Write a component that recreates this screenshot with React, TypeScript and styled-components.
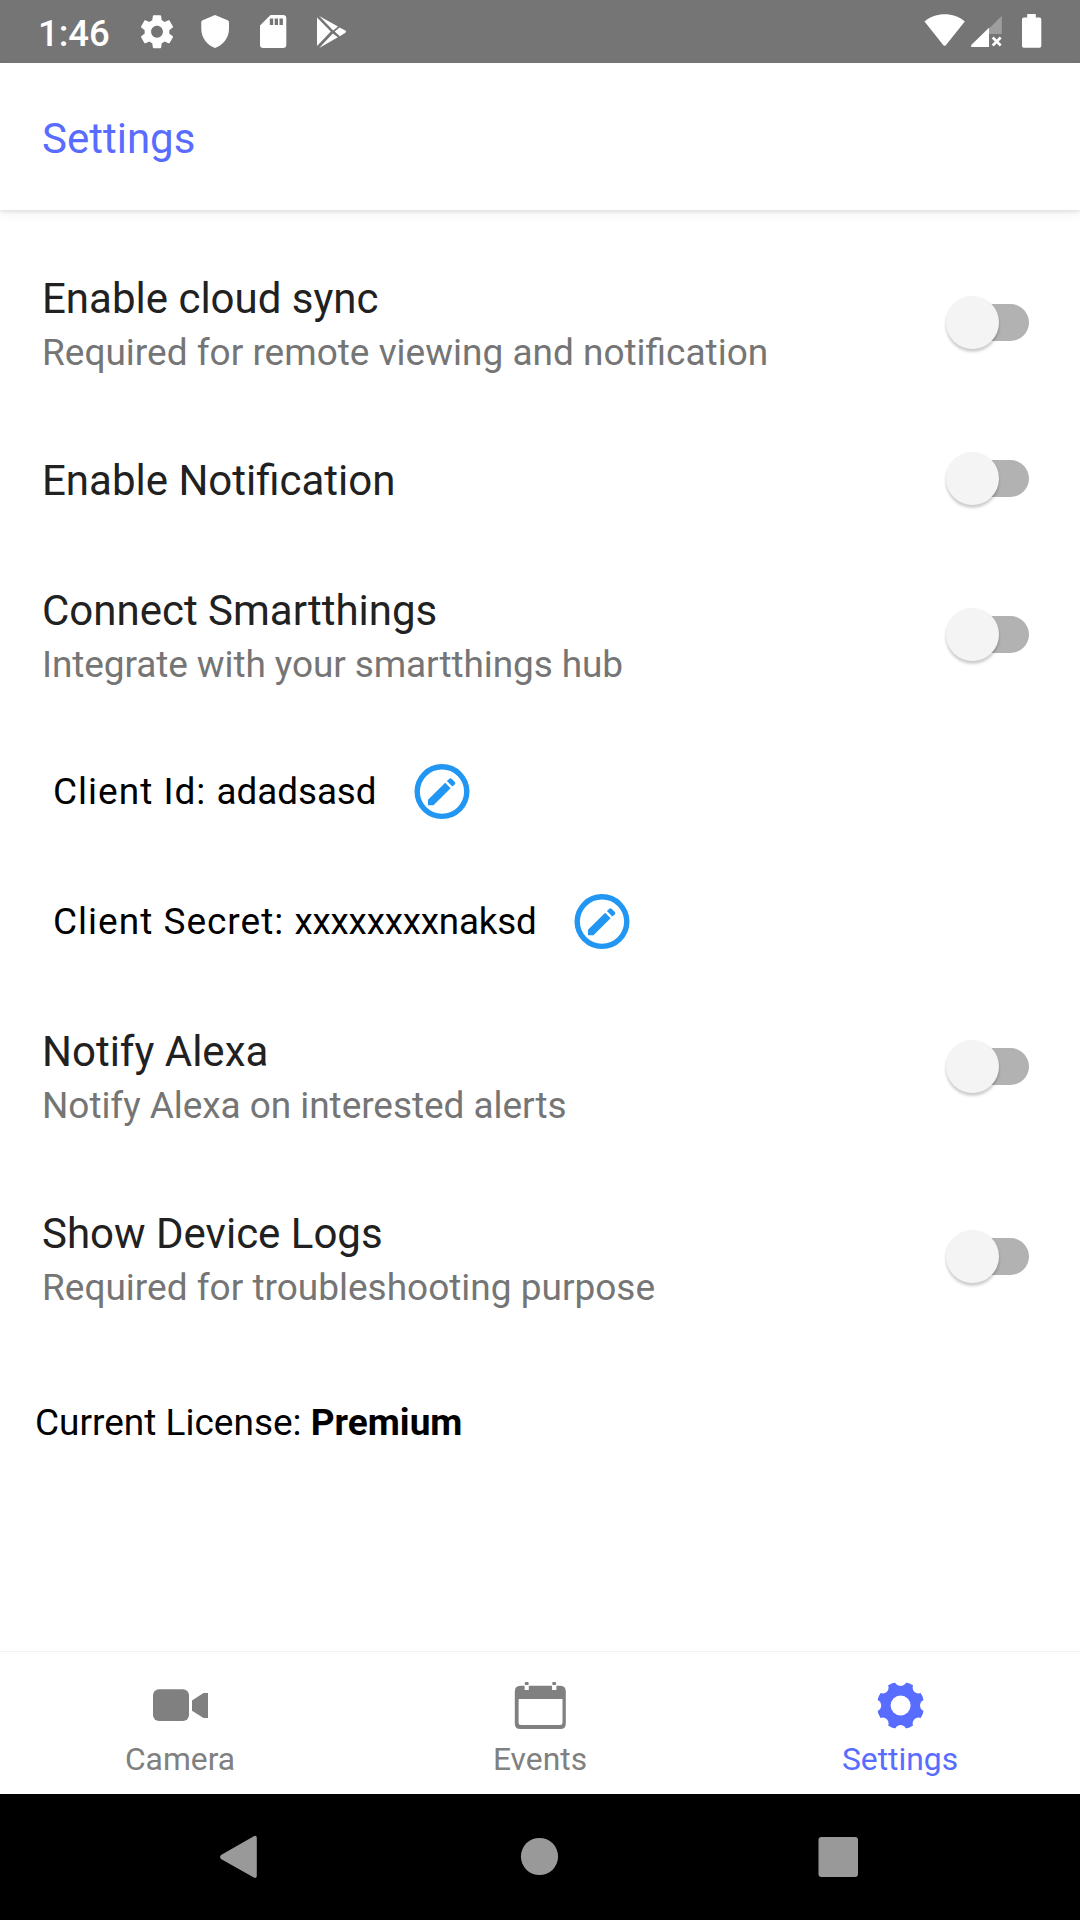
import React, { useState } from "react";
import styled, { createGlobalStyle } from "styled-components";

const Global = createGlobalStyle`
  * { box-sizing: border-box; }
  body { margin: 0; background: #fff; font-family: Roboto, "Liberation Sans", sans-serif; }
`;

const Screen = styled.div`
  width: 1080px;
  height: 1920px;
  display: flex;
  flex-direction: column;
  background: #fff;
  overflow: hidden;
`;

const StatusBar = styled.div`
  height: 63px;
  flex: none;
  display: flex;
  align-items: flex-start;
  justify-content: space-between;
  background: #757575;
`;

const StatusGroup = styled.div`
  display: flex;
  height: 63px;
`;

const Clock = styled.span`
  width: 92px;
  margin-left: 38px;
  font-size: 36.5px;
  font-weight: 500;
  line-height: 67px;
  color: #fff;
  white-space: nowrap;
`;

const Header = styled.header`
  height: 147px;
  flex: none;
  padding-left: 42px;
  display: flex;
  align-items: center;
  box-shadow: 0 2px 3px rgba(0, 0, 0, 0.08), 0 4px 10px rgba(0, 0, 0, 0.06);
`;

const HeaderTitle = styled.h1`
  margin: 5px 0 0;
  font-size: 42px;
  font-weight: 400;
  line-height: 52px;
  color: #586cff;
`;

const Content = styled.main`
  flex: 1;
  padding-top: 24px;
  display: flex;
  flex-direction: column;
`;

const Row = styled.div<{ $tall?: boolean }>`
  height: ${(p) => (p.$tall ? 182 : 130)}px;
  padding: 38.6px 51px 0 42px;
  flex: none;
  display: flex;
  justify-content: space-between;
`;

const RowText = styled.div`
  display: flex;
  flex-direction: column;
`;

const RowTitle = styled.span`
  font-size: 42px;
  line-height: 52px;
  color: #212121;
  white-space: nowrap;
`;

const RowHint = styled.span<{ $tracking: number }>`
  font-size: 37px;
  line-height: 56px;
  letter-spacing: ${(p) => (p.$tracking ? `${p.$tracking}px` : "normal")};
  color: #757575;
  white-space: nowrap;
`;

const SwitchTrack = styled.button<{ $on: boolean; $offset: number }>`
  width: 73px;
  height: 37px;
  margin-top: ${(p) => p.$offset}px;
  padding: 0;
  border: 0;
  border-radius: 19px;
  display: flex;
  align-items: center;
  justify-content: ${(p) => (p.$on ? "flex-end" : "flex-start")};
  background: ${(p) => (p.$on ? "#acb5ff" : "#b2b2b2")};
`;

const SwitchThumb = styled.span<{ $on: boolean }>`
  width: 53px;
  height: 53px;
  flex: none;
  margin-left: -10px;
  border-radius: 50%;
  background: ${(p) => (p.$on ? "#586cff" : "#f4f4f4")};
  box-shadow: 0 3px 3px rgba(0, 0, 0, 0.18), 0 1px 3px rgba(0, 0, 0, 0.05);
`;

const ClientRow = styled.div`
  height: 129.5px;
  flex: none;
  padding: 0 0 1px 53px;
  display: flex;
  align-items: center;
  gap: 37px;
`;

const ClientText = styled.span`
  font-size: 36.75px;
  line-height: 52px;
  color: #000;
  white-space: pre;
`;

const ClientLabel = styled.span`
  font-size: 37px;
  letter-spacing: 1px;
`;

const ClientValue = styled.span<{ $tracking: number }>`
  letter-spacing: ${(p) => p.$tracking}px;
`;

const License = styled.p`
  margin: 46px 0 0 35px;
  font-size: 37px;
  line-height: 52px;
  color: #000;
`;

const TabBar = styled.nav`
  height: 143px;
  flex: none;
  border-top: 1px solid #f2f2f2;
  display: grid;
  grid-template-columns: repeat(3, 1fr);
`;

const Tab = styled.div<{ $active?: boolean }>`
  padding-top: 26px;
  display: flex;
  flex-direction: column;
  align-items: center;
  color: ${(p) => (p.$active ? "#586cff" : "#808080")};
`;

const TabLabel = styled.span`
  margin-top: 5px;
  font-size: 31.8px;
  line-height: 40px;
`;

const NavBar = styled.footer`
  height: 126px;
  flex: none;
  background: #000;
`;

const Toggle = ({ offset }: { offset: number }) => {
  const [on, setOn] = useState(false);
  return (
    <SwitchTrack $on={on} $offset={offset} role="switch" aria-checked={on} onClick={() => setOn(!on)}>
      <SwitchThumb $on={on} />
    </SwitchTrack>
  );
};

type SettingProps = { title: string; hint?: string; offset: number; tracking?: number };

const Setting = ({ title, hint, offset, tracking = 0 }: SettingProps) => (
  <Row $tall={!!hint}>
    <RowText>
      <RowTitle>{title}</RowTitle>
      {hint && <RowHint $tracking={tracking}>{hint}</RowHint>}
    </RowText>
    <Toggle offset={offset} />
  </Row>
);

const EditIcon = () => (
  <svg width="56" height="56" viewBox="0 0.4 56 56" fill="#2196f3">
    <circle cx="28" cy="28" r="24.8" fill="none" stroke="#2196f3" strokeWidth="5.4" />
    <path d="M14 41.7V36.2L31.2 19.2L36.6 24.6L19.5 41.7Z" />
    <path d="M32.9 17.5L35.4 15.1Q36.5 14.2 37.6 15.1L40.8 18.3Q41.8 19.5 40.8 20.6L38.3 22.9Z" />
  </svg>
);

const ClientField = ({ label, value, tracking = 0 }: { label: string; value: string; tracking?: number }) => (
  <ClientRow>
    <ClientText>
      <ClientLabel>{label + ": "}</ClientLabel>
      <ClientValue $tracking={tracking}>{value}</ClientValue>
    </ClientText>
    <EditIcon />
  </ClientRow>
);

const StatusIcons = () => (
  <svg width="230" height="63" viewBox="130 0 230 63" fill="#fff">
    <g transform="translate(137.2 12) scale(1.65)">
      <path d="M19.43 12.98c.04-.32.07-.64.07-.98s-.03-.66-.07-.98l2.11-1.65c.19-.15.24-.42.12-.64l-2-3.46c-.12-.22-.39-.3-.61-.22l-2.49 1c-.52-.4-1.08-.73-1.69-.98l-.38-2.65C14.46 2.18 14.25 2 14 2h-4c-.25 0-.46.18-.49.42l-.38 2.65c-.61.25-1.17.59-1.69.98l-2.49-1c-.23-.09-.49 0-.61.22l-2 3.46c-.13.22-.07.49.12.64l2.11 1.65c-.04.32-.07.65-.07.98s.03.66.07.98l-2.11 1.65c-.19.15-.24.42-.12.64l2 3.46c.12.22.39.3.61.22l2.49-1c.52.4 1.08.73 1.69.98l.38 2.65c.03.24.24.42.49.42h4c.25 0 .46-.18.49-.42l.38-2.65c.61-.25 1.17-.59 1.69-.98l2.49 1c.23.09.49 0 .61-.22l2-3.46c.12-.22.07-.49-.12-.64l-2.11-1.65zM12 15.6c-1.98 0-3.6-1.62-3.6-3.6s1.62-3.6 3.6-3.6 3.6 1.62 3.6 3.6-1.62 3.6-3.6 3.6z" />
    </g>
    <path d="M215 15L227.6 20.2Q229 20.8 229 22.3V29C229 38 222.5 45.5 215 48C207.5 45.5 201.3 38 201.3 29V22.3Q201.3 20.8 202.7 20.2Z" />
    <path
      fillRule="evenodd"
      d="M270.5 15H283Q286.3 15 286.3 18.2V44.8Q286.3 48 283 48H263.3Q260 48 260 44.8V25.5ZM269.8 18.6V25H273.2V18.6ZM274.7 18.6V25H278V18.6ZM279.5 18.6V25H282.9V18.6Z"
    />
    <path d="M317 17.6L330.8 31.5L317 46ZM319.2 16L338 26.6L333.2 30.6ZM339.5 27.4L345.4 30.6Q346.8 31.7 345.4 32.8L339.8 36.2L334.7 31.6ZM332.8 33.4L337.9 37.3L319.2 48Z" />
  </svg>
);

const SignalIcons = () => (
  <svg width="170" height="63" viewBox="910 0 170 63" fill="#fff">
    <path d="M924.5 21.5C936 11.8 953.5 11.8 964.8 21.5L945.8 45.2Q944.6 46.2 943.4 45.2Z" />
    <path d="M1001.8 16V34H989V28.5Z" opacity=".3" />
    <path d="M989 27.8V47H971.5Q970.3 46 971.5 44.8Z" />
    <path d="M992.7 37.5L1000.7 45.5M1000.7 37.5L992.7 45.5" stroke="#fff" strokeWidth="2.6" />
    <path d="M1027.2 14H1035.8V17.5H1039.5Q1041.3 17.5 1041.3 19.3V46Q1041.3 47.8 1039.5 47.8H1023.8Q1022 47.8 1022 46V19.3Q1022 17.5 1023.8 17.5H1027.2Z" />
  </svg>
);

const CameraIcon = () => (
  <svg width="56" height="56" viewBox="152 1678 56 56" fill="currentColor">
    <rect x="153" y="1689.3" width="36" height="31.7" rx="6" />
    <path d="M192 1700.5L203.5 1693H208V1718H203.5L192 1710.8Z" />
  </svg>
);

const CalendarIcon = () => (
  <svg width="56" height="56" viewBox="512.2 1678 56 56" fill="currentColor">
    <path
      fillRule="evenodd"
      d="M520.5 1685.8H524.8V1690H529V1685.8H552.3V1690H556.6V1685.8H560.6Q566 1686 566 1691.5V1723.5Q566 1729 560.6 1729H520.5Q515 1729 515 1723.5V1691.5Q515 1686 520.5 1685.8ZM518.8 1699V1722.5Q518.8 1725 521.3 1725H560.2Q562.7 1725 562.7 1722.5V1699Z"
    />
    <rect x="525" y="1682" width="3.8" height="3" rx=".8" />
    <rect x="552.5" y="1682" width="3.8" height="3" rx=".8" />
  </svg>
);

const GearIcon = () => (
  <svg width="56" height="56" viewBox="-28.6 -27.5 56 56">
    <mask id="gear" maskUnits="userSpaceOnUse" x="-28" y="-28" width="56" height="56">
      <circle r="23.8" fill="#fff" />
      <circle r="10" fill="#000" />
      {[0, 45, 90, 135, 180, 225, 270, 315].map((a) => (
        <circle key={a} cy="-25.3" r="5.9" fill="#000" transform={`rotate(${a})`} />
      ))}
    </mask>
    <circle r="24" fill="currentColor" mask="url(#gear)" />
  </svg>
);

const NavIcons = () => (
  <svg width="1080" height="126" viewBox="0 1794 1080 126" fill="#999">
    <path d="M221 1855L253.8 1836.2Q256.8 1835 256.8 1838V1875.8Q256.8 1878.8 253.8 1877.5L221 1859Q219.2 1857 221 1855Z" />
    <circle cx="539.5" cy="1856.5" r="18.6" />
    <rect x="818.5" y="1837" width="39.5" height="40" rx="3" />
  </svg>
);

export default function App() {
  return (
    <Screen>
      <Global />
      <StatusBar>
        <StatusGroup>
          <Clock>1:46</Clock>
          <StatusIcons />
        </StatusGroup>
        <SignalIcons />
      </StatusBar>
      <Header>
        <HeaderTitle>Settings</HeaderTitle>
      </Header>
      <Content>
        <Setting title="Enable cloud sync" hint="Required for remote viewing and notification" offset={31.4} />
        <Setting title="Enable Notification" offset={5} />
        <Setting title="Connect Smartthings" hint="Integrate with your smartthings hub" offset={31.4} tracking={-0.1} />
        <ClientField label="Client Id" value="adadsasd" />
        <ClientField label="Client Secret" value="xxxxxxxxnaksd" tracking={-0.18} />
        <Setting title="Notify Alexa" hint="Notify Alexa on interested alerts" offset={22.4} tracking={-0.06} />
        <Setting title="Show Device Logs" hint="Required for troubleshooting purpose" offset={30.4} />
        <License>
          Current License: <b>Premium</b>
        </License>
      </Content>
      <TabBar>
        <Tab>
          <CameraIcon />
          <TabLabel>Camera</TabLabel>
        </Tab>
        <Tab>
          <CalendarIcon />
          <TabLabel>Events</TabLabel>
        </Tab>
        <Tab $active>
          <GearIcon />
          <TabLabel>Settings</TabLabel>
        </Tab>
      </TabBar>
      <NavBar>
        <NavIcons />
      </NavBar>
    </Screen>
  );
}
